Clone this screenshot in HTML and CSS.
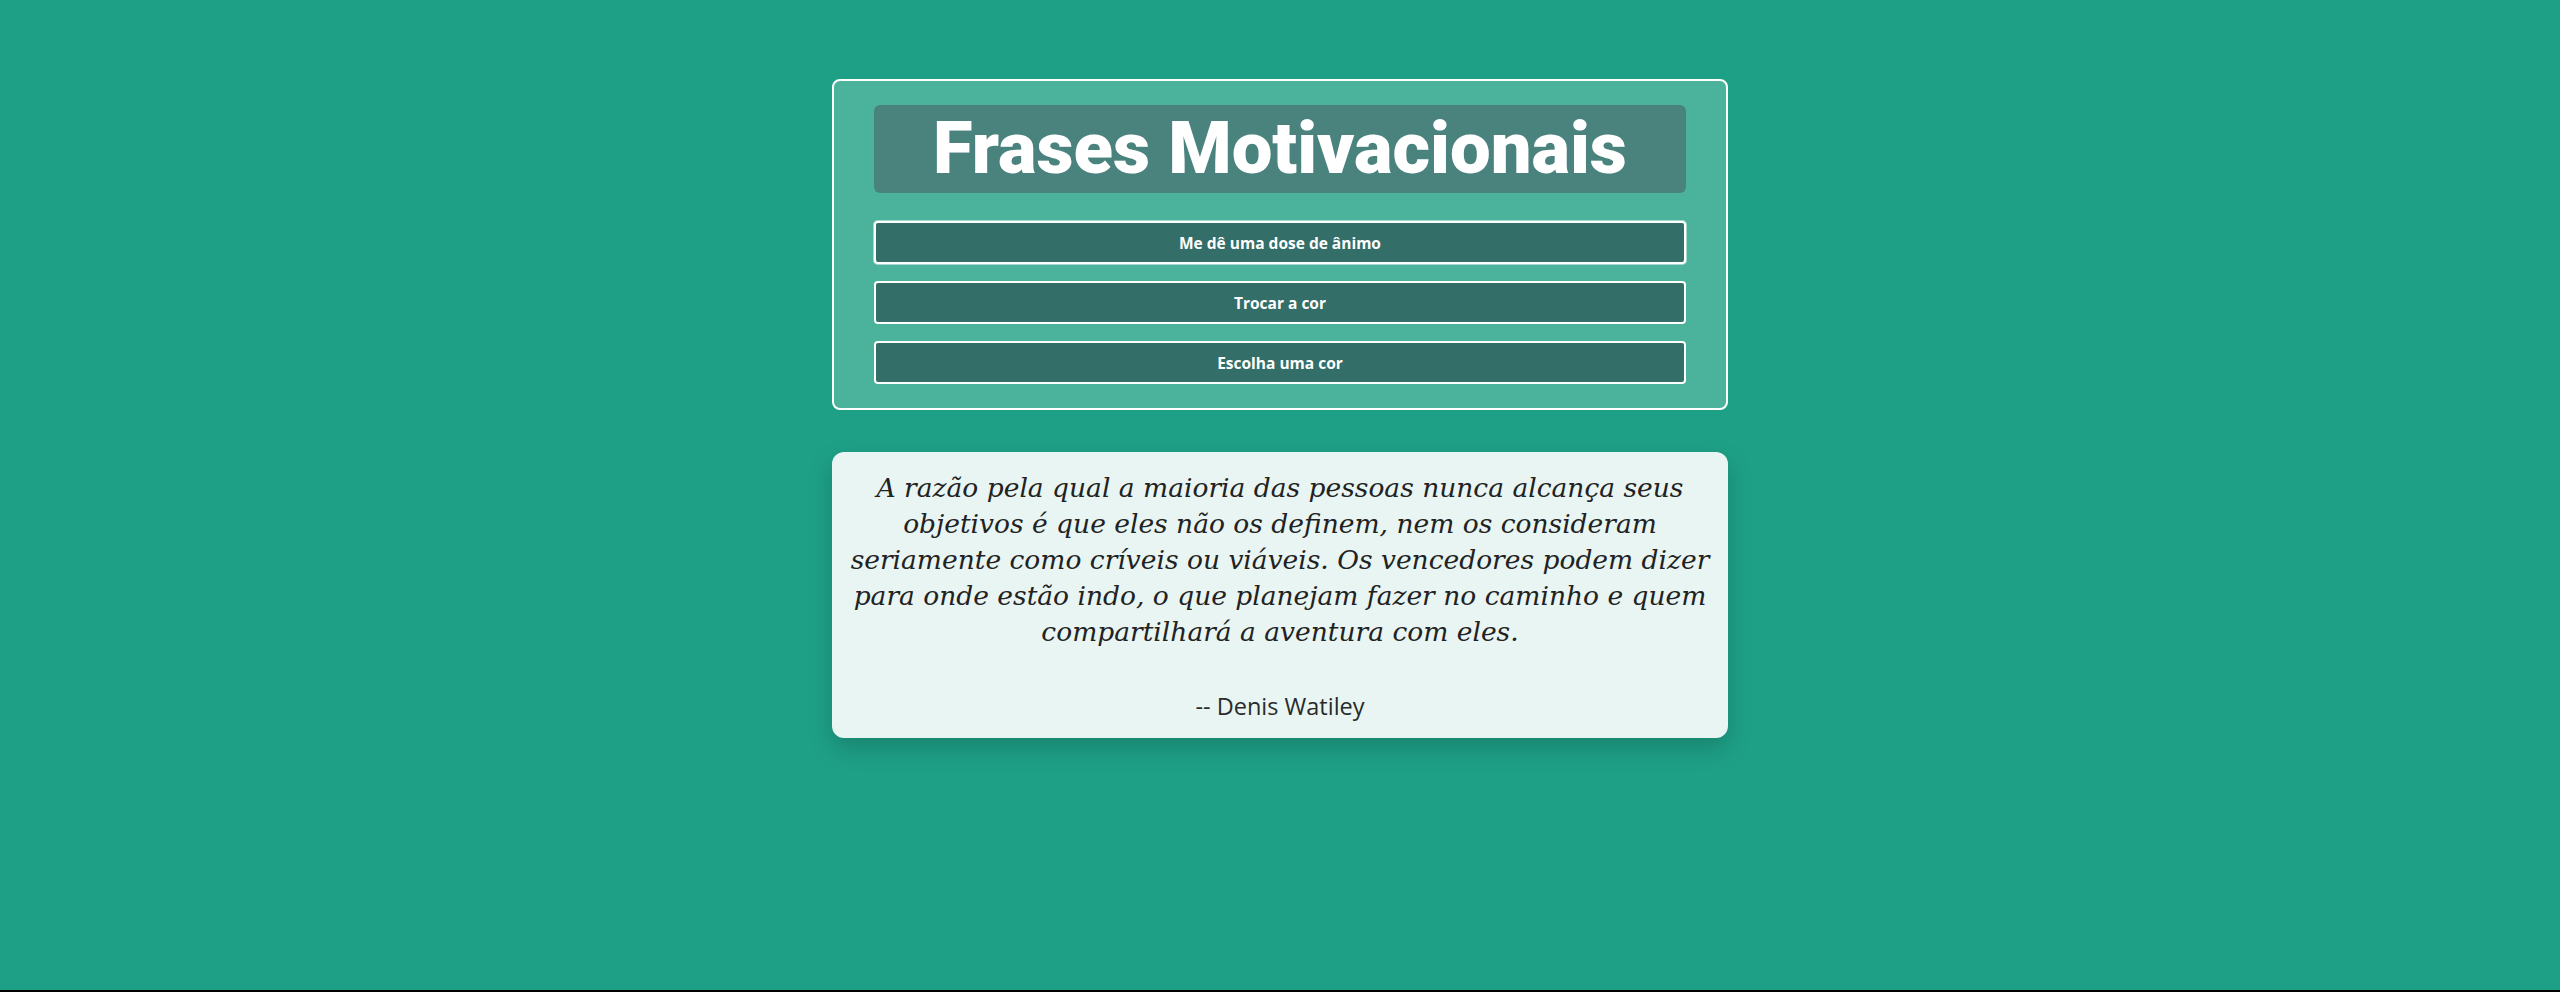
FILE: index.html
```html
<!DOCTYPE html>
<html lang="pt-BR">
<head>
<meta charset="utf-8">
<title>Frases Motivacionais</title>
<link rel="stylesheet" href="styles.css">
</head>
<body>
  <main class="page">
    <section class="panel">
      <h1 class="title">Frases Motivacionais</h1>
      <div class="actions">
        <button class="btn btn-focus" type="button">Me dê uma dose de ânimo</button>
        <button class="btn" type="button">Trocar a cor</button>
        <button class="btn" type="button">Escolha uma cor</button>
      </div>
    </section>
    <section class="quote-card">
      <p class="quote">A razão pela qual a maioria das pessoas nunca alcança seus objetivos é que eles não os definem, nem os consideram seriamente como críveis ou viáveis. Os vencedores podem dizer para onde estão indo, o que planejam fazer no caminho e quem compartilhará a aventura com eles.</p>
      <p class="author">-- Denis Watiley</p>
    </section>
  </main>
</body>
</html>
```

FILE: styles.css
```css
html {
  background: #000;
  margin: 0;
}

body {
  margin: 0;
  height: 990px;
  background: #1ea087;
}

.page {
  display: flex;
  flex-direction: column;
  align-items: center;
  padding-top: 79px;
  gap: 42px;
}

.panel {
  box-sizing: border-box;
  width: 896px;
  border: 2px solid #ffffff;
  border-radius: 8px;
  background: #4bb39c;
  padding: 24px 40px;
  display: flex;
  flex-direction: column;
  gap: 28px;
}

.title {
  margin: 0;
  height: 88px;
  border-radius: 6px;
  background: #4a837e;
  color: #ffffff;
  font-family: Roboto, "Liberation Sans", sans-serif;
  font-weight: 900;
  font-size: 72.4px;
  line-height: 88px;
  text-align: center;
}

.actions {
  display: flex;
  flex-direction: column;
  gap: 17px;
}

.btn {
  box-sizing: border-box;
  height: 43px;
  width: 100%;
  border: 2px solid #ffffff;
  border-radius: 4px;
  background: #336e69;
  color: #ffffff;
  font-family: "Open Sans", "Noto Sans", sans-serif;
  font-weight: 700;
  font-size: 15.5px;
  padding: 0;
}

.btn-focus {
  box-shadow: 0 0 0 1px rgba(255, 255, 255, 0.5);
}

.quote-card {
  box-sizing: border-box;
  width: 896px;
  border-radius: 12px;
  background: #e8f5f2;
  padding: 18px 16px 16px;
  box-shadow: 0 10px 25px rgba(0, 0, 0, 0.18);
  text-align: center;
}

.quote {
  margin: 0;
  font-family: "DejaVu Serif", serif;
  font-style: italic;
  font-size: 26.5px;
  line-height: 36px;
  color: #222222;
}

.author {
  margin: 41px 0 0;
  font-family: "Open Sans", "Noto Sans", sans-serif;
  font-size: 23.5px;
  line-height: 31px;
  color: #2a2a2a;
}
```
